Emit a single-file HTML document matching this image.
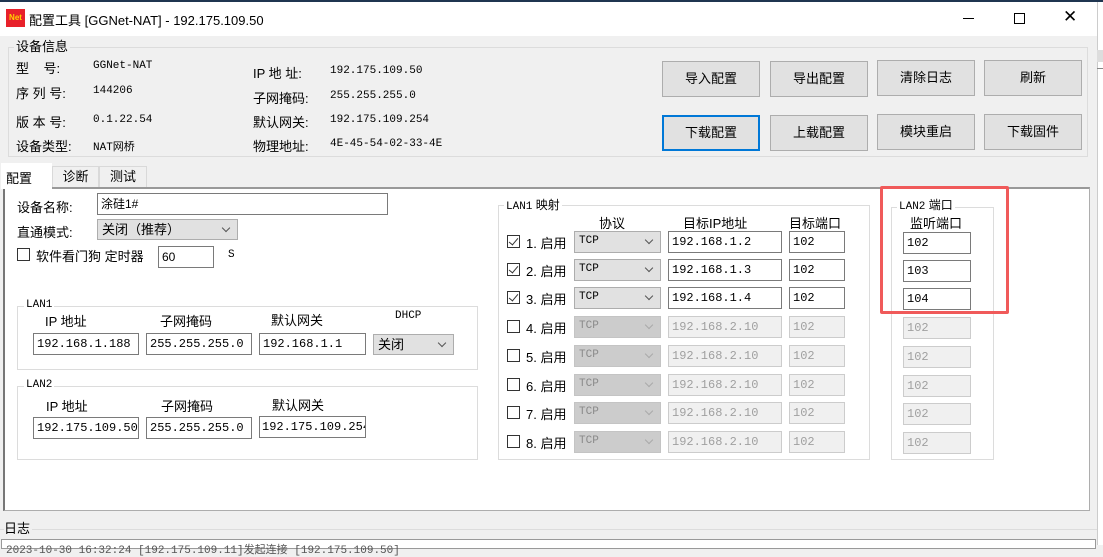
<!DOCTYPE html>
<html><head><meta charset="utf-8"><style>
*{box-sizing:border-box;margin:0;padding:0}
body{width:1103px;height:545px;overflow:hidden;background:#f0f0f0;position:relative;font-family:"Liberation Sans","Noto Sans CJK SC",sans-serif;font-size:12px;color:#000}
.a{position:absolute;white-space:nowrap}
.m{font-family:"Liberation Mono","Noto Sans CJK SC",monospace;font-size:11px}
.in{position:absolute;background:#fff;border:1px solid #7a7a7a;height:22px;padding:2px 3px;font-size:12px;line-height:16px;overflow:hidden}
.dis{background:#f0f0f0;border-color:#ccc;color:#a0a0a0}
.sel{position:absolute;background:#e1e1e1;border:1px solid #adadad;height:21px;padding:2px 4px;line-height:15px}
.sel.d{background:#cccccc;border-color:#c4c4c4;color:#8a8a8a}
.sel:after{content:"";position:absolute;right:8px;top:5px;width:5px;height:5px;border-right:1px solid #555;border-bottom:1px solid #555;transform:rotate(45deg)}
.sel.d:after{border-color:#aaa}
.btn{position:absolute;background:#e1e1e1;border:1px solid #adadad;width:98px;height:36px;text-align:center;line-height:34px;font-size:13px}
.grp{position:absolute;border:1px solid #dcdcdc}
.lab{position:absolute;background:inherit;padding:0 2px;line-height:14px}
.cb{position:absolute;width:13px;height:13px;border:1px solid #333;background:#fff}
.cb.c:after{content:"";position:absolute;left:3px;top:0px;width:4px;height:8px;border-right:1.5px solid #333;border-bottom:1.5px solid #333;transform:rotate(40deg)}
</style></head><body>
<div class="a" style="left:0;top:0;width:1097px;height:36px;background:#fff"></div>
<div class="a" style="left:0;top:0;width:1103px;height:2px;background:#1f3550"></div>
<div class="a" style="left:6px;top:9px;width:19px;height:18px;background:#e8212a;color:#ffd200;font-size:8px;font-weight:bold;line-height:18px;text-align:center">Net</div>
<div class="a" style="left:29px;top:10px;font-size:13px">配置工具 [GGNet-NAT] - 192.175.109.50</div>
<div class="a" style="left:963px;top:18px;width:11px;height:1px;background:#000"></div>
<div class="a" style="left:1014px;top:13px;width:11px;height:11px;border:1px solid #000"></div>
<div class="a" style="left:1063px;top:7px;font-size:17px;line-height:20px;font-weight:300">✕</div>
<div class="a" style="left:1097px;top:2px;width:6px;height:543px;background:#fff;border-left:1px solid #ccc"></div>
<div class="a" style="left:1097px;top:50px;width:6px;height:12px;background:#ddd"></div>
<div class="a" style="left:1097px;top:68px;width:6px;height:1px;background:#888"></div>

<div class="grp" style="left:8px;top:47px;width:1080px;height:110px"></div>
<div class="lab" style="left:14px;top:40px;font-size:13px;background:#f0f0f0">设备信息</div>
<div class="a" style="left:16px;top:58px;font-size:13px">型&nbsp;&nbsp;&nbsp;&nbsp;号:</div>
<div class="a" style="left:16px;top:83px;font-size:13px">序 列 号:</div>
<div class="a" style="left:16px;top:112px;font-size:13px">版 本 号:</div>
<div class="a" style="left:16px;top:136px;font-size:13px">设备类型:</div>
<div class="a m" style="left:93px;top:60px">GGNet-NAT</div>
<div class="a m" style="left:93px;top:85px">144206</div>
<div class="a m" style="left:93px;top:114px">0.1.22.54</div>
<div class="a m" style="left:93px;top:138px">NAT网桥</div>
<div class="a" style="left:253px;top:63px;font-size:13px">IP 地 址:</div>
<div class="a" style="left:253px;top:88px;font-size:13px">子网掩码:</div>
<div class="a" style="left:253px;top:112px;font-size:13px">默认网关:</div>
<div class="a" style="left:253px;top:136px;font-size:13px">物理地址:</div>
<div class="a m" style="left:330px;top:65px">192.175.109.50</div>
<div class="a m" style="left:330px;top:90px">255.255.255.0</div>
<div class="a m" style="left:330px;top:114px">192.175.109.254</div>
<div class="a m" style="left:330px;top:138px">4E-45-54-02-33-4E</div>

<div class="btn" style="left:662px;top:61px">导入配置</div>
<div class="btn" style="left:770px;top:61px">导出配置</div>
<div class="btn" style="left:877px;top:60px">清除日志</div>
<div class="btn" style="left:984px;top:60px">刷新</div>
<div class="btn" style="left:662px;top:115px;border:2px solid #0078d7;line-height:32px">下载配置</div>
<div class="btn" style="left:770px;top:115px">上载配置</div>
<div class="btn" style="left:877px;top:114px">模块重启</div>
<div class="btn" style="left:984px;top:114px">下载固件</div>

<div class="a" style="left:52px;top:166px;width:47px;height:21px;border:1px solid #d9d9d9;border-bottom:none;text-align:center;line-height:20px;font-size:13px">诊断</div>
<div class="a" style="left:99px;top:166px;width:48px;height:21px;border:1px solid #d9d9d9;border-bottom:none;text-align:center;line-height:20px;font-size:13px">测试</div>
<div class="a" style="left:3px;top:187px;width:1087px;height:324px;background:#fff;border:1px solid #adadad;border-left:2px solid #777;border-top:2px solid #999"></div>
<div class="a" style="left:1px;top:163px;width:51px;height:26px;background:#fff;font-size:13px;padding:5px 0 0 5px">配置</div>

<div class="a" style="left:17px;top:197px;font-size:13px">设备名称:</div>
<div class="in" style="left:97px;top:193px;width:291px">涂硅1#</div>
<div class="a" style="left:17px;top:222px;font-size:13px">直通模式:</div>
<div class="sel" style="left:97px;top:219px;width:141px;font-size:13px">关闭（推荐）</div>
<div class="cb" style="left:17px;top:248px"></div>
<div class="a" style="left:36px;top:246px;font-size:13px">软件看门狗 定时器</div>
<div class="in" style="left:158px;top:246px;width:56px">60</div>
<div class="a m" style="left:228px;top:249px">S</div>

<div class="grp" style="left:17px;top:306px;width:461px;height:64px"></div>
<div class="lab m" style="left:24px;top:298px;background:#fff;font-size:11px">LAN1</div>
<div class="a" style="left:45px;top:311px;font-size:13px">IP 地址</div>
<div class="a" style="left:160px;top:311px;font-size:13px">子网掩码</div>
<div class="a" style="left:271px;top:310px;font-size:13px">默认网关</div>
<div class="a m" style="left:395px;top:310px;font-size:11px">DHCP</div>
<div class="in m" style="left:33px;top:333px;width:106px">192.168.1.188</div>
<div class="in m" style="left:146px;top:333px;width:106px">255.255.255.0</div>
<div class="in m" style="left:259px;top:333px;width:107px">192.168.1.1</div>
<div class="sel" style="left:373px;top:334px;width:81px;font-size:13px">关闭</div>

<div class="grp" style="left:17px;top:386px;width:461px;height:74px"></div>
<div class="lab m" style="left:24px;top:378px;background:#fff;font-size:11px">LAN2</div>
<div class="a" style="left:46px;top:396px;font-size:13px">IP 地址</div>
<div class="a" style="left:161px;top:396px;font-size:13px">子网掩码</div>
<div class="a" style="left:272px;top:395px;font-size:13px">默认网关</div>
<div class="in m" style="left:33px;top:417px;width:106px">192.175.109.50</div>
<div class="in m" style="left:146px;top:417px;width:106px">255.255.255.0</div>
<div class="in m" style="left:259px;top:416px;width:107px;padding-left:2px">192.175.109.254</div>

<div class="grp" style="left:498px;top:205px;width:372px;height:255px"></div>
<div class="lab" style="left:504px;top:198px;background:#fff;font-size:12px"><span class="m" style="font-size:11px">LAN1</span> 映射</div>
<div class="a" style="left:599px;top:213px;font-size:13px">协议</div>
<div class="a" style="left:683px;top:213px;font-size:13px">目标IP地址</div>
<div class="a" style="left:789px;top:213px;font-size:13px">目标端口</div>
<div class="grp" style="left:891px;top:207px;width:103px;height:253px"></div>
<div class="lab" style="left:897px;top:198px;background:#fff;font-size:12px"><span class="m" style="font-size:11px">LAN2</span> 端口</div>
<div class="a" style="left:910px;top:213px;font-size:13px">监听端口</div>

<div id="rows"></div>
<script>
var ys=[231,259,287,316,345,374,402,431],h='';
for(var i=0;i<8;i++){var y=ys[i],e=i<3,d=e?'':' dis',sd=e?'':' d';
h+='<div class="cb'+(e?' c':'')+'" style="left:507px;top:'+(y+4)+'px"></div>';
h+='<div class="a" style="left:526px;top:'+(y+2)+'px;font-size:13px">'+(i+1)+'. 启用</div>';
h+='<div class="sel m'+sd+'" style="left:574px;top:'+y+'px;width:87px;height:22px">TCP</div>';
h+='<div class="in m'+d+'" style="left:668px;top:'+y+'px;width:114px">'+(e?'192.168.1.'+(i+2):'192.168.2.10')+'</div>';
h+='<div class="in m'+d+'" style="left:789px;top:'+y+'px;width:56px">102</div>';
h+='<div class="in m'+d+'" style="left:903px;top:'+(y+1)+'px;width:68px">'+(e?(102+i):102)+'</div>';}
document.getElementById('rows').innerHTML=h;
</script>
<div class="a" style="left:880px;top:186px;width:129px;height:128px;border:3px solid #f05a5a;border-radius:2px"></div>

<div class="a" style="left:0;top:529px;width:1097px;height:1px;background:#dcdcdc"></div>
<div class="a" style="left:4px;top:518px;font-size:13px;background:#f0f0f0;padding-right:2px">日志</div>
<div class="a" style="left:1px;top:539px;width:1095px;height:10px;background:#fff;border:1px solid #999"></div>
<div class="a m" style="left:6px;top:541px;font-size:11px;color:#555">2023-10-30 16:32:24 [192.175.109.11]发起连接 [192.175.109.50]</div>
</body></html>
